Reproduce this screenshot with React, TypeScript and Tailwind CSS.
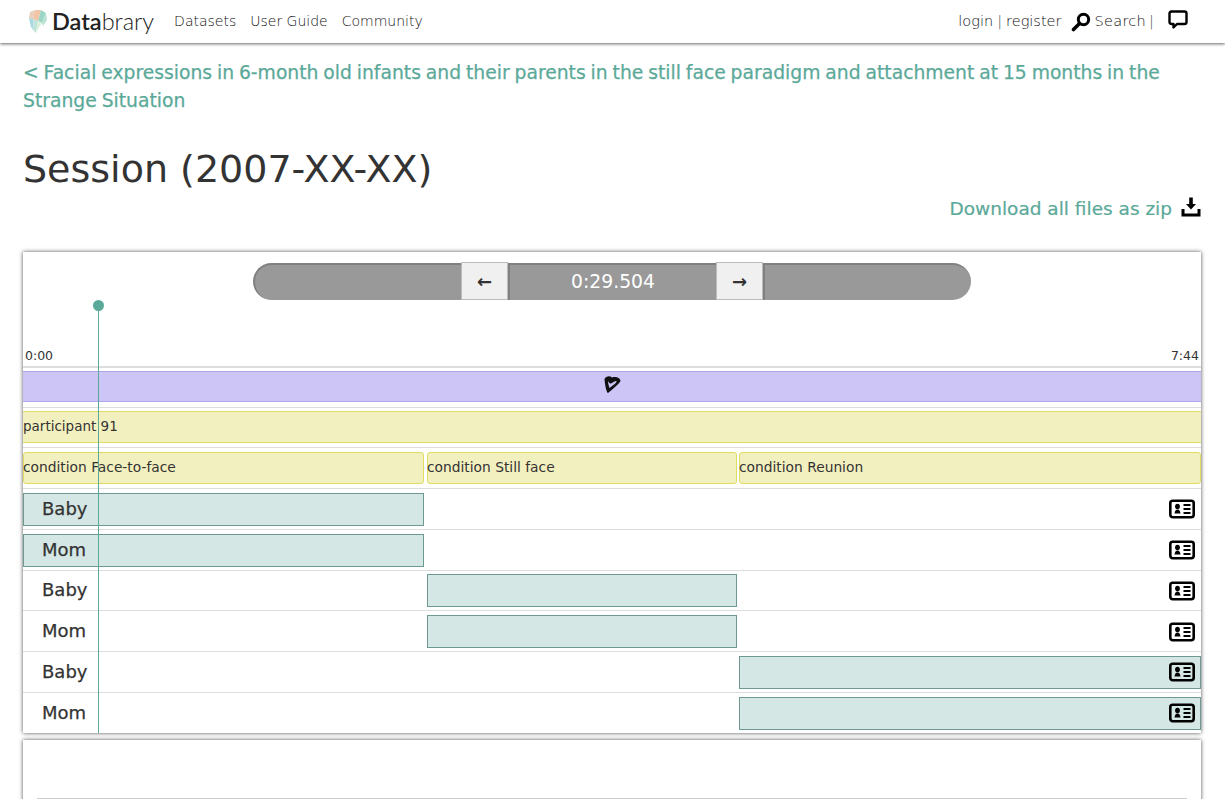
const teal = 'text-[#5ba999]';

function Logo() {
  return (
    <svg width="22" height="26" viewBox="0 0 22 26" className="shrink-0">
      <path d="M3 3 L8 1 L6 10 L2 9 Z" fill="#e8d0bc" />
      <path d="M8 1 L14 1 L11 12 L6 10 Z" fill="#f2c4a8" />
      <path d="M14 1 L19 4 L15 14 L11 12 Z" fill="#9cd6c6" />
      <path d="M19 4 L20 11 L16 17 L15 14 Z" fill="#b8e2d2" />
      <path d="M2 9 L6 10 L7 22 L4 18 Z" fill="#a9d8e0" />
      <path d="M6 10 L11 12 L9 24 L7 22 Z" fill="#bfe4dc" />
      <path d="M11 12 L15 14 L11 20 L9 24 Z" fill="#dcefd8" />
    </svg>
  );
}

function SearchIcon() {
  return (
    <svg width="20" height="20" viewBox="0 0 20 20" className="shrink-0">
      <circle cx="12.5" cy="7.5" r="5.2" fill="none" stroke="#000" strokeWidth="3" />
      <path d="M8.5 11.5 L2.5 17.5" stroke="#000" strokeWidth="3.6" strokeLinecap="round" />
    </svg>
  );
}

function ChatIcon() {
  return (
    <svg width="20" height="20" viewBox="0 0 20 20" className="shrink-0">
      <path
        d="M3.5 1.5 H16.5 Q18.5 1.5 18.5 3.5 V12 Q18.5 14 16.5 14 H9 L5.5 17.5 V14 H3.5 Q1.5 14 1.5 12 V3.5 Q1.5 1.5 3.5 1.5 Z"
        fill="#fff"
        stroke="#000"
        strokeWidth="2.4"
        strokeLinejoin="round"
      />
    </svg>
  );
}

function DownloadIcon() {
  return (
    <svg width="20" height="20" viewBox="0 0 20 20" className="shrink-0">
      <path d="M8.2 0.5 H11.8 V7 H15 L10 12.5 L5 7 H8.2 Z" fill="#000" />
      <path d="M0.5 12 H3.5 V16.5 H16.5 V12 H19.5 V19.5 H0.5 Z" fill="#000" />
    </svg>
  );
}

function IdCard() {
  return (
    <svg width="26" height="20" viewBox="0 0 26 20" className="shrink-0">
      <rect x="1.3" y="1.8" width="23.4" height="16.4" rx="2.4" fill="none" stroke="#000" strokeWidth="2.6" />
      <ellipse cx="8.5" cy="7.5" rx="2.4" ry="2.8" fill="#000" />
      <path d="M5.5 14.5 Q6 10.5 8.5 10.5 Q11 10.5 11.5 14.5 Z" fill="#000" />
      <path d="M14.5 6 H21.5 M14.5 10 H21.5 M14.5 14 H21.5" stroke="#000" strokeWidth="2" />
    </svg>
  );
}

function Scribble() {
  return (
    <svg width="20" height="20" viewBox="0 0 20 20">
      <path
        d="M2.5 5 C4 2 8 1.5 10 3.5 C13 2.5 18 3 18.5 7 C17 10 12 14 6 19 C5 19 3 13 2.5 5 Z M6 7 C7 9 8 9.5 9 9.5 C11 8.5 12 7 14.5 7 C15 8.5 11 11.5 7.5 14 C6.8 12 6 9 6 7 Z"
        fill="#111"
        fillRule="evenodd"
      />
    </svg>
  );
}

const segments = [
  { label: 'Baby', col: 'col-start-1' },
  { label: 'Mom', col: 'col-start-1' },
  { label: 'Baby', col: 'col-start-3' },
  { label: 'Mom', col: 'col-start-3' },
  { label: 'Baby', col: 'col-start-5' },
  { label: 'Mom', col: 'col-start-5' },
];

export default function App() {
  return (
    <div className="h-[799px] overflow-hidden bg-white font-['DejaVu_Sans',sans-serif] text-[#333]">
      <header className="relative z-10 flex h-[43px] items-center justify-between bg-white pl-[27px] pr-[37px] shadow-[0_1px_3px_rgba(0,0,0,0.6)]">
        <div className="flex items-center">
          <Logo />
          <span className="ml-[3px] mr-[20px] font-['Lato',sans-serif] text-[23.5px] leading-none text-[#222]">
            <span className="font-semibold">Data</span>
            <span className="font-light">brary</span>
          </span>
          <nav className="flex gap-[14px] text-[14px] font-extralight text-[#111]">
            <span>Datasets</span>
            <span>User Guide</span>
            <span>Community</span>
          </nav>
        </div>
        <div className="flex items-center text-[14.5px] font-extralight text-[#111]">
          <span>login</span>
          <span className="mx-[4px] text-[#555]">|</span>
          <span>register</span>
          <span className="ml-[10px] mr-[3px]">
            <SearchIcon />
          </span>
          <span className="tracking-[0.3px]">Search</span>
          <span className="ml-[3px] mr-[14px] text-[#555]">|</span>
          <span className="-mt-[3px]">
            <ChatIcon />
          </span>
        </div>
      </header>

      <main className="px-[23px] pr-[24px]">
        <a className={`mt-[16px] block text-[18.75px] leading-[28px] [word-spacing:-1.1px] [-webkit-text-stroke:0.25px] ${teal}`}>
          &lt; Facial expressions in 6-month old infants and their parents in the still face paradigm and attachment at 15 months in the Strange Situation
        </a>
        <h1 className="mt-[30px] text-[38px] leading-[48px]">Session (2007-XX-XX)</h1>
        <div className="mt-[4px] flex h-[24px] items-center justify-end gap-[9px]">
          <a className={`text-[18.5px] [-webkit-text-stroke:0.2px] ${teal}`}>Download all files as zip</a>
          <span className="-mt-[4px]">
            <DownloadIcon />
          </span>
        </div>

        <section className="relative mt-[31px] bg-white shadow-[0_0_4px_rgba(0,0,0,0.7)]">
          <div className="flex justify-center pt-[11px]">
            <div className="flex h-[37px] w-[718px]">
              <div className="flex-1 rounded-l-full border-l-[2px] border-t-[2px] border-[#808080] bg-[#999]" />
              <button className="-mt-px flex w-[47px] items-center justify-center border border-[#bbb] bg-[#f0f0f0] text-[18px] font-bold text-[#333]">
                ←
              </button>
              <div className="flex w-[208px] items-center justify-center border-l-[2px] border-t-[2px] border-[#808080] bg-[#999] text-[18.75px] text-white">
                0:29.504
              </div>
              <button className="-mt-px flex w-[47px] items-center justify-center border border-[#bbb] bg-[#f0f0f0] text-[18px] font-bold text-[#333]">
                →
              </button>
              <div className="flex-1 rounded-r-full border-l-[2px] border-t-[2px] border-[#808080] bg-[#999]" />
            </div>
          </div>

          <div className="mt-[48px] flex justify-between px-[2px] text-[12.5px] leading-[16px] text-[#333]">
            <span>0:00</span>
            <span>7:44</span>
          </div>

          <div className="mt-[2px] border-t-[2px] border-[#ddd] pt-[3px]">
            <div className="flex h-[31px] items-center justify-center border-y border-[#b3a6e8] bg-[#cdc5f5]">
              <span className="-mt-[5px]">
                <Scribble />
              </span>
            </div>
          </div>

          <div className="mt-[5px] border-t border-[#ddd] pt-[3px]">
            <div className="flex h-[32px] items-center border-y border-[#dfdc5f] bg-[#f3f0bf] pb-[2px] text-[13.5px]">
              participant 91
            </div>
          </div>

          <div className="mt-[4px] grid grid-cols-[401px_3px_310px_2px_1fr] border-t border-[#ddd] pt-[4px] text-[13.8px]">
            <div className="col-start-1 flex h-[32px] items-center rounded-[3px] border border-[#dfdc5f] bg-[#f3f0bf] pb-[2px]">
              <span className="-ml-px">condition Face-to-face</span>
            </div>
            <div className="col-start-3 flex h-[32px] items-center rounded-[3px] border border-[#dfdc5f] bg-[#f3f0bf] pb-[2px]">
              <span className="-ml-px">condition Still face</span>
            </div>
            <div className="col-start-5 flex h-[32px] items-center rounded-[3px] border border-[#dfdc5f] bg-[#f3f0bf] pb-[2px]">
              <span className="-ml-px">condition Reunion</span>
            </div>
          </div>

          <div className="mt-[4px]">
            {segments.map((s, i) => (
              <div
                key={i}
                className="grid h-[40.8px] grid-cols-[401px_3px_310px_2px_1fr] grid-rows-1 border-t border-[#ddd] pt-[3.8px]"
              >
                <div className={`${s.col} row-start-1 h-[33px] border border-[#6c9a93] bg-[#d5e7e5]`} />
                <span className="relative col-start-1 row-start-1 h-[33px] pl-[19px] text-[18px] leading-[32px] [-webkit-text-stroke:0.25px]">
                  {s.label}
                </span>
                <span className="relative col-start-5 row-start-1 flex h-[33px] items-center justify-end pr-[6px]">
                  <IdCard />
                </span>
              </div>
            ))}
          </div>

          <div className="absolute bottom-0 left-[75px] top-[53px] w-px bg-[#5ba999]">
            <div className="absolute left-[-5px] top-[-5px] h-[11px] w-[11px] rounded-full bg-[#5ba999]" />
          </div>
        </section>

        <section className="mt-[7px] h-[200px] bg-white px-[14px] pt-[58px] shadow-[0_0_4px_rgba(0,0,0,0.7)]">
          <div className="border-t border-[#ccc]" />
        </section>
      </main>
    </div>
  );
}
